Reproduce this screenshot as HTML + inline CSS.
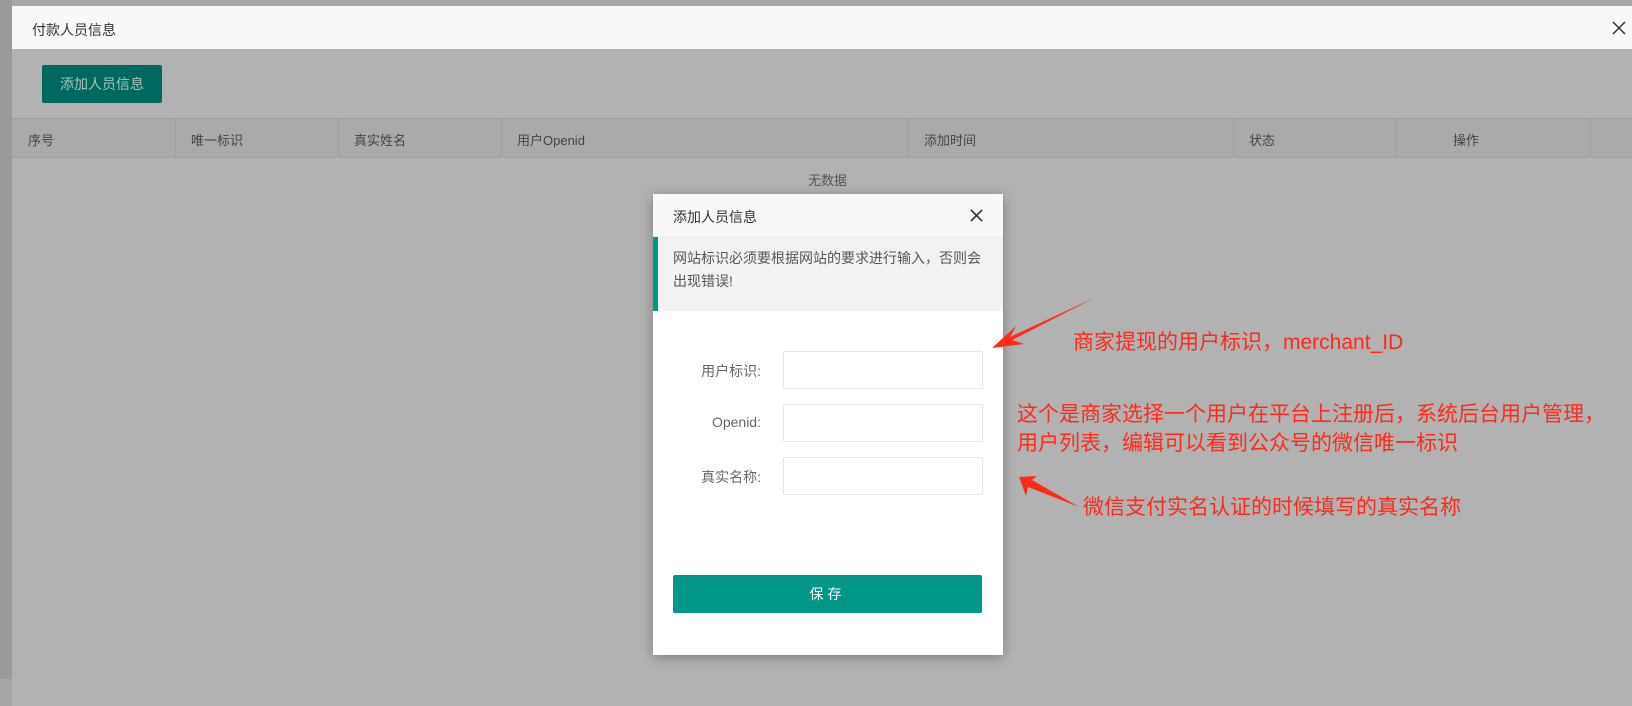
<!DOCTYPE html>
<html><head><meta charset="utf-8"><style>
*{margin:0;padding:0;box-sizing:border-box}
body{width:1632px;height:679px;overflow:hidden;background:#a6a6a6;font-family:"Liberation Sans","Noto Sans CJK SC",sans-serif;position:relative;color:#333}
.abs{position:absolute}
#panel{left:12px;top:6px;width:1640px;height:700px;background:#b2b2b2}
#hdr{left:12px;top:6px;width:1640px;height:43px;background:#f8f8f8;font-size:14px;color:#333;padding:14px 0 0 20px}
#bt{left:42px;top:65px;width:120px;height:38px;background:#00695f;border-radius:2px;color:#a9c4c0;font-size:14px;line-height:38px;text-align:center}
#th{left:12px;top:118px;width:1640px;height:40px;background:#aaaaaa;border-top:1px solid #a0a0a0;border-bottom:1px solid #a0a0a0;font-size:13px;color:#444}
#th span{position:absolute;top:11px}
.vl{position:absolute;top:0;width:1px;height:38px;background:#a0a0a0}
#modal{left:653px;top:194px;width:350px;height:461px;background:#fff;box-shadow:0 2px 12px rgba(0,0,0,.3)}
input{position:absolute;width:200px;height:38px;border:1px solid #e6e6e6;border-radius:2px;background:#fff}
.lb{position:absolute;font-size:14px;color:#666;text-align:right;width:108px}
.red{position:absolute;color:#ff2a1a;font-size:21px;white-space:nowrap;font-family:"Liberation Sans","Noto Sans CJK SC",sans-serif}
</style></head><body>
<div class="abs" style="left:0;top:0;width:12px;height:679px;background:#9a9a9a"></div>
<div class="abs" id="panel"></div>
<div class="abs" id="hdr">付款人员信息</div>
<svg class="abs" style="left:1612px;top:21px" width="14" height="14" viewBox="0 0 14 14"><path d="M1 1L13 13M13 1L1 13" stroke="#333" stroke-width="1.5"/></svg>
<div class="abs" id="bt">添加人员信息</div>
<div class="abs" id="th">
<span style="left:16px">序号</span><span style="left:179px">唯一标识</span><span style="left:342px">真实姓名</span><span style="left:505px">用户Openid</span><span style="left:912px">添加时间</span><span style="left:1237px">状态</span><span style="left:1441px">操作</span>
<div class="vl" style="left:163px"></div><div class="vl" style="left:326px"></div><div class="vl" style="left:489px"></div><div class="vl" style="left:896px"></div><div class="vl" style="left:1221px"></div><div class="vl" style="left:1384px"></div><div class="vl" style="left:1578px"></div>
</div>
<div class="abs" style="left:808px;top:170px;font-size:13px;color:#555">无数据</div>

<div class="abs" id="modal">
 <div class="abs" style="left:0;top:0;width:350px;height:43px;background:#f8f8f8;border-bottom:1px solid #eee;font-size:14px;padding:13px 0 0 20px;color:#333">添加人员信息</div>
 <svg class="abs" style="left:317px;top:15px" width="13" height="13" viewBox="0 0 14 14"><path d="M1 1L13 13M13 1L1 13" stroke="#333" stroke-width="1.8"/></svg>
 <div class="abs" style="left:0;top:43px;width:350px;height:74px;background:#f2f2f2;border-left:5px solid #009688;font-size:14px;color:#555;line-height:23px;padding:10px 18px 0 15px">网站标识必须要根据网站的要求进行输入，否则会出现错误!</div>
 <div class="lb" style="left:0;top:167px">用户标识:</div>
 <input style="left:130px;top:157px">
 <div class="lb" style="left:0;top:220px">Openid:</div>
 <input style="left:130px;top:210px">
 <div class="lb" style="left:0;top:273px">真实名称:</div>
 <input style="left:130px;top:263px">
 <div class="abs" style="left:20px;top:381px;width:309px;height:38px;background:#009688;border-radius:2px;color:#fff;font-size:14px;line-height:38px;text-align:center;letter-spacing:4px">保存</div>
</div>

<svg class="abs" style="left:0;top:0" width="1632" height="679">
<polygon points="1096,297 1010,337 1016,326 992,348 1024,344 1012,340" fill="#ff2a1a"/>
<polygon points="1079,507 1032,480 1037,476 1019,477 1026,496 1028,487" fill="#ff2a1a"/>
</svg>
<div class="red" style="left:1073px;top:326px">商家提现的用户标识，merchant_ID</div>
<div class="red" style="left:1017px;top:398px">这个是商家选择一个用户在平台上注册后，系统后台用户管理，</div>
<div class="red" style="left:1017px;top:427px">用户列表，编辑可以看到公众号的微信唯一标识</div>
<div class="red" style="left:1083px;top:491px">微信支付实名认证的时候填写的真实名称</div>
</body></html>
